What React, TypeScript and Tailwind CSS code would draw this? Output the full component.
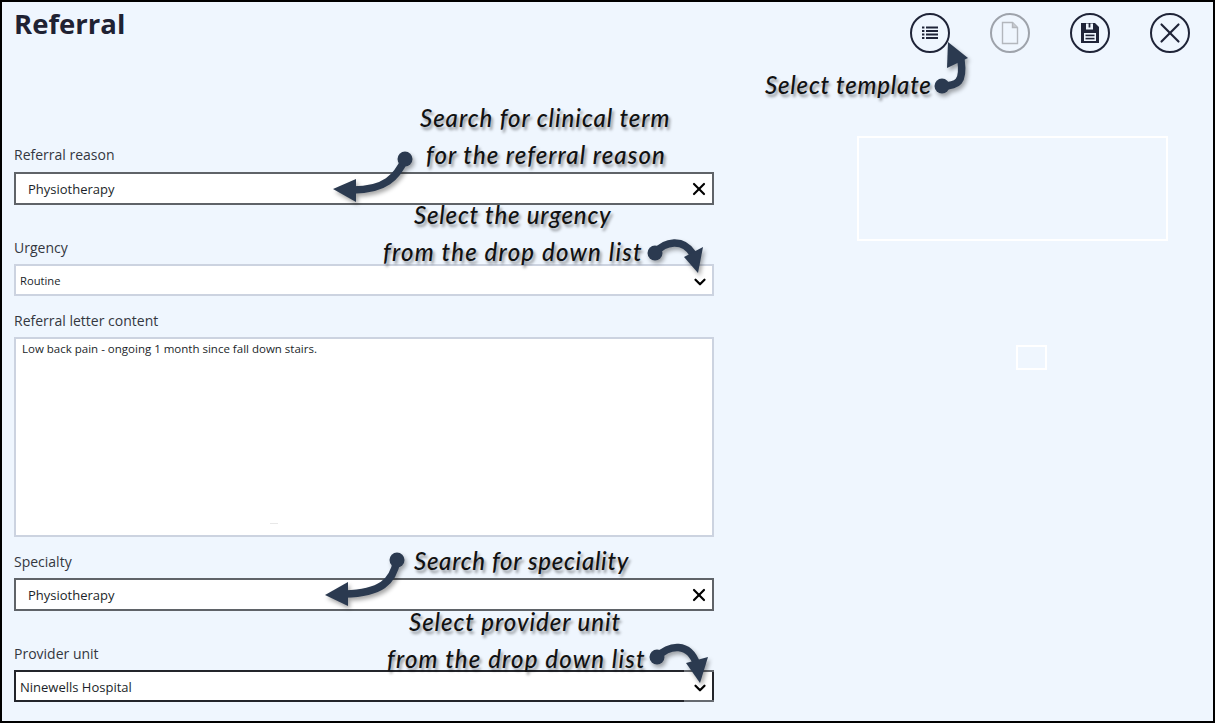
import { X, ChevronDown } from "lucide-react";

const uiFont = "font-['Open_Sans',sans-serif]";

function Circle({ children, faded }: { children: React.ReactNode; faded?: boolean }) {
  return (
    <div className={`w-10 h-10 rounded-full border-2 flex items-center justify-center ${faded ? "border-[#9ea3ab]" : "border-[#1f2438]"}`}>
      {children}
    </div>
  );
}

function Label({ children }: { children: React.ReactNode }) {
  return <label className="block h-5 leading-5 text-[14px] text-[#34373f]">{children}</label>;
}

function SearchBox({ value, tight }: { value: string; tight?: boolean }) {
  return (
    <div className={`${tight ? "mt-[6px]" : "mt-[7px]"} h-[33px] border-2 border-[#5f6368] bg-white flex items-center justify-between pl-3 pr-[3px]`}>
      <span className="text-[13px] pt-[2px] text-[#1b1f2a]">{value}</span>
      <X size={20} strokeWidth={2.6} className="text-black mt-[1px]" />
    </div>
  );
}

function Select({ value, dark, small }: { value: string; dark?: boolean; small?: boolean }) {
  return (
    <div className={`relative mt-[6px] h-[32px] border-2 bg-white flex items-center justify-between pl-1 pr-[3px] ${dark ? "border-[#23252b]" : "border-[#ccd3e0]"}`}>
      <span className={`${small ? "text-[11.200px] pt-[2px]" : "text-[13px] pt-[3px]"} text-[#1b1f2a]`}>{value}</span>
      <ChevronDown size={18} strokeWidth={3} className="text-black mt-[3px]" />
      {dark && (
        <>
          <span className="absolute right-[-2px] top-[-2px] w-[30px] h-[2px] bg-[#666a70]" />
          <span className="absolute right-[-2px] bottom-[-2px] w-[30px] h-[2px] bg-[#666a70]" />
        </>
      )}
    </div>
  );
}

const notes = [
  { text: "Search for clinical term", x: 420, y: 100, track: "tracking-[0.95px]" },
  { text: "for the referral reason", x: 426, y: 137, track: "tracking-[1.05px]" },
  { text: "Select the urgency", x: 414, y: 197, track: "tracking-[0.8px]" },
  { text: "from the drop down list", x: 383, y: 234, track: "tracking-[1.2px]" },
  { text: "Search for speciality", x: 414, y: 543, track: "tracking-[0.7px]" },
  { text: "Select provider unit", x: 409, y: 604, track: "tracking-[0.95px]" },
  { text: "from the drop down list", x: 387, y: 641, track: "tracking-[1.15px]" },
  { text: "Select template", x: 765, y: 67, track: "tracking-[0.8px]" },
];

export default function App() {
  return (
    <div className={`relative w-[1215px] h-[723px] overflow-hidden border-2 border-black bg-[#eff6fe] ${uiFont}`}>
      <header className="flex items-start justify-between pl-3 pr-[23px] pt-[10px] h-[143px]">
        <h1 className="text-[27.500px] leading-[22px] pt-[1px] font-bold text-[#1f2233]">Referral</h1>
        <div className="flex gap-10 mt-[1px]">
          <Circle>
            <svg width="18" height="18" viewBox="0 0 18 18" fill="#1f2438">
              <rect x="1" y="2.500" width="2.400" height="2" />
              <rect x="5" y="2.500" width="12" height="2" />
              <rect x="1" y="6" width="2.400" height="2" />
              <rect x="5" y="6" width="12" height="2" />
              <rect x="1" y="9.500" width="2.400" height="2" />
              <rect x="5" y="9.500" width="12" height="2" />
              <rect x="1" y="13" width="2.400" height="2" />
              <rect x="5" y="13" width="12" height="2" />
            </svg>
          </Circle>
          <Circle faded>
            <svg width="18" height="24" viewBox="0 0 18 24" fill="none" stroke="#b3b7bd" strokeWidth="1.400">
              <path d="M1.500 1.500h10l5 5v16h-15z" />
              <path d="M11.500 1.500v5h5" fill="#c8ccd2" />
            </svg>
          </Circle>
          <Circle>
            <svg width="20" height="22" viewBox="0 0 20 22">
              <path fillRule="evenodd" fill="#1f2438" d="M1 1h14l4 4v16H1zM6 1.500v6h7v-6h-2.600v4H8.600v-4zM4 11v8h12v-8z" />
              <rect x="5.500" y="12.600" width="9" height="1.600" fill="#1f2438" />
              <rect x="5.500" y="15.800" width="9" height="1.600" fill="#1f2438" />
            </svg>
          </Circle>
          <Circle>
            <X size={34} strokeWidth={1.500} className="text-[#1f2438]" />
          </Circle>
        </div>
      </header>

      <main className="flex pl-3">
        <form className="w-[700px]">
          <Label>Referral reason</Label>
          <SearchBox value="Physiotherapy" />
          <div className="mt-[33px]">
            <Label>Urgency</Label>
            <Select value="Routine" small />
          </div>
          <div className="mt-[15px]">
            <Label>Referral letter content</Label>
            <div className="relative mt-[6px] h-[200px] border-2 border-[#ccd3e0] bg-white pl-[6px] pt-[2px] text-[11.500px] leading-4 text-[#1b1f2a]">
              Low back pain - ongoing 1 month since fall down stairs.
              <span className="absolute left-[254px] bottom-[11px] w-2 h-px bg-[#e8e8e8]" />
            </div>
          </div>
          <div className="mt-[15px]">
            <Label>Specialty</Label>
            <SearchBox value="Physiotherapy" tight />
          </div>
          <div className="mt-[33px]">
            <Label>Provider unit</Label>
            <Select value="Ninewells Hospital" dark />
          </div>
        </form>
        <aside className="ml-[143px] w-[311px]">
          <div className="-mt-[9px] h-[105px] border-2 border-white" />
          <div className="mt-[104px] ml-[159px] w-[31px] h-[25px] border-2 border-white" />
        </aside>
      </main>

      {/* annotations sit on top of the form, coordinates are the page's */}
      <svg className="absolute -left-[2px] -top-[2px] drop-shadow-[2px_3px_2px_rgba(0,0,0,0.35)]" width="1215" height="723" viewBox="0 0 1215 723" fill="#2b3a50" stroke="none">
        <g fill="none" stroke="#2b3a50" strokeWidth="7.500" strokeLinecap="round">
          <path d="M405 159c-8 18-20 31-52 31" />
          <path d="M655 253c10-12 28-15 38 1" />
          <path d="M942 86c16 0 22-4 19-26" />
          <path d="M397 560c-4 22-16 33-52 34" />
          <path d="M657 657c12-12 32-16 40 8" />
        </g>
        <circle cx="405" cy="159" r="7.500" />
        <circle cx="655" cy="253" r="7.500" />
        <circle cx="942" cy="86" r="7.500" />
        <circle cx="397" cy="560" r="7.500" />
        <circle cx="657" cy="657" r="7.500" />
        <path d="M333 189l23-10v23z" />
        <path d="M698 273l-14-16 19-10z" />
        <path d="M948 42l20 16-21 10z" />
        <path d="M325 595l23-13v24z" />
        <path d="M700 683l-14-20 22-6z" />
      </svg>
      {notes.map((n) => (
        <span
          key={n.text + n.y}
          className={`absolute h-9 leading-9 whitespace-nowrap text-[24px] italic font-['Lato',sans-serif] font-medium text-[#111] [text-shadow:2px_3px_3px_rgba(0,0,0,0.4)] ${n.track}`}
          style={{ left: n.x - 2, top: n.y - 2 }}
        >
          {n.text}
        </span>
      ))}
    </div>
  );
}
